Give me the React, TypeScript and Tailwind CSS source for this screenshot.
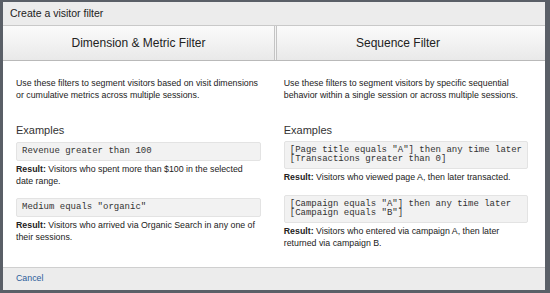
const sans = "font-['Liberation_Sans',Helvetica,Arial,sans-serif]";
const mono = "font-['Liberation_Mono','Courier_New',monospace]";

function Code({ lines }: { lines: string[] }) {
	return (
		<div
			className={`${mono} rounded-[2px] border border-[#e3e3e3] bg-[#f2f2f2] px-[5px] py-[4px] text-[9px] leading-[9px] text-[#333] whitespace-pre`}
		>
			{lines.map((l) => (
				<div key={l}>{l}</div>
			))}
		</div>
	);
}

function Result({ text }: { text: string }) {
	return (
		<p className="mt-[2px] text-[8.8px] leading-[12px] text-[#222]">
			<span className="font-bold">Result:</span> {text}
		</p>
	);
}

export default function App() {
	return (
		<div
			className={`${sans} flex h-[293px] w-[550px] flex-col bg-[#5a5f67] pt-[2px] pr-[5px] pb-[3px] pl-[3px]`}
		>
			<div className="flex flex-1 flex-col bg-white">
				{/* title bar */}
				<div className="flex h-[24px] items-center border-b border-[#c9c9c9] bg-[#ececec] px-[7px] text-[10.5px] text-[#222]">
					Create a visitor filter
				</div>

				{/* tabs */}
				<div className="flex h-[35px] border-b border-[#b9b9b9] bg-gradient-to-b from-[#fbfbfb] to-[#e9e9e9] text-[12px] text-[#222]">
					<div className="flex w-[271px] items-center justify-center">
						Dimension &amp; Metric Filter
					</div>
					<div className="w-[3px] border-x border-[#c4c4c4] bg-[#f4f4f4]" />
					<div className="flex flex-1 items-center justify-center pr-[26px]">
						Sequence Filter
					</div>
				</div>

				{/* content */}
				<div className="flex flex-1">
					<div className="w-[271px] pt-[16px] pl-[13px] pr-[8px]">
						<p className="text-[8.8px] leading-[12px] text-[#222]">
							Use these filters to segment visitors based on visit dimensions
							or cumulative metrics across multiple sessions.
						</p>
						<h3 className="mt-[23px] text-[11px] leading-[12px] text-[#333]">
							Examples
						</h3>
						<div className="mt-[6px] pr-[3px]">
							<Code lines={["Revenue greater than 100"]} />
							<Result text="Visitors who spent more than $100 in the selected date range." />
						</div>
						<div className="mt-[11px] pr-[3px]">
							<Code lines={['Medium equals "organic"']} />
							<Result text="Visitors who arrived via Organic Search in any one of their sessions." />
						</div>
					</div>
					<div className="w-[3px]" />
					<div className="flex-1 pt-[16px] pl-[9px] pr-[17px]">
						<p className="text-[8.8px] leading-[12px] text-[#222]">
							Use these filters to segment visitors by specific sequential
							behavior within a single session or across multiple sessions.
						</p>
						<h3 className="mt-[23px] text-[11px] leading-[12px] text-[#333]">
							Examples
						</h3>
						<div className="mt-[5px]">
							<Code
								lines={[
									'[Page title equals "A"] then any time later',
									"[Transactions greater than 0]",
								]}
							/>
							<Result text="Visitors who viewed page A, then later transacted." />
						</div>
						<div className="mt-[12px]">
							<Code
								lines={[
									'[Campaign equals "A"] then any time later',
									'[Campaign equals "B"]',
								]}
							/>
							<Result text="Visitors who entered via campaign A, then later returned via campaign B." />
						</div>
					</div>
				</div>

				{/* footer */}
				<div className="flex h-[23px] items-center border-t border-[#cfcfcf] bg-[#ececec] px-[13px] text-[8.8px] text-[#2b5d9b]">
					Cancel
				</div>
			</div>
		</div>
	);
}
